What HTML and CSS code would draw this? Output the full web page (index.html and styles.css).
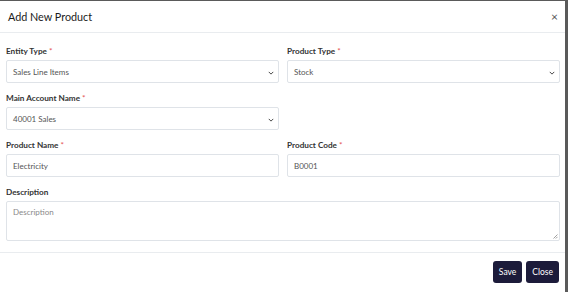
FILE: index.html
```html
<!DOCTYPE html>
<html>
<head>
<meta charset="utf-8">
<link rel="stylesheet" href="styles.css">
</head>
<body>
<div class="modal">
  <div class="modal-header">
    <h5 class="modal-title">Add New Product</h5>
    <span class="close">&times;</span>
  </div>
  <div class="modal-body">
    <div class="grid">
      <div class="field">
        <label class="label">Entity Type <span class="req">*</span></label>
        <div class="control select">Sales Line Items<svg class="chev" viewBox="0 0 8 5" width="6" height="4"><path d="M1 1l3 3 3-3" fill="none" stroke="#444" stroke-width="1.3"/></svg></div>
      </div>
      <div class="field">
        <label class="label">Product Type <span class="req">*</span></label>
        <div class="control select">Stock<svg class="chev" viewBox="0 0 8 5" width="6" height="4"><path d="M1 1l3 3 3-3" fill="none" stroke="#444" stroke-width="1.3"/></svg></div>
      </div>
      <div class="field">
        <label class="label">Main Account Name <span class="req">*</span></label>
        <div class="control select">40001 Sales<svg class="chev" viewBox="0 0 8 5" width="6" height="4"><path d="M1 1l3 3 3-3" fill="none" stroke="#444" stroke-width="1.3"/></svg></div>
      </div>
      <div class="field"></div>
      <div class="field">
        <label class="label">Product Name <span class="req">*</span></label>
        <div class="control">Electricity</div>
      </div>
      <div class="field">
        <label class="label">Product Code <span class="req">*</span></label>
        <div class="control">B0001</div>
      </div>
      <div class="field full">
        <label class="label">Description</label>
        <div class="control textarea"><span class="ph">Description</span><svg class="grip" viewBox="0 0 6 6" width="6" height="6"><path d="M5.5 1.5L1.5 5.5M5.5 3.8L3.8 5.5" stroke="#888" stroke-width="0.8"/></svg></div>
      </div>
    </div>
  </div>
  <div class="modal-footer">
    <button class="btn">Save</button>
    <button class="btn">Close</button>
  </div>
</div>
</body>
</html>
```
FILE: styles.css
```css
html, body {
  margin: 0;
  padding: 0;
}
body {
  background: #5a5a5a;
  width: 568px;
  height: 292px;
  overflow: hidden;
  font-family: Lato, "Noto Sans", sans-serif;
  color: #212529;
}
.modal {
  margin-top: 1px;
  width: 565px;
  height: 291px;
  background: #fff;
  box-sizing: border-box;
}
.modal-header {
  height: 31px;
  border-bottom: 1px solid #e9ecef;
  display: flex;
  align-items: center;
  justify-content: space-between;
  padding: 0 7px 0 8px;
}
.modal-title {
  margin: 0;
  font-size: 10.8px;
  font-weight: 400;
  color: #1a1a1a;
}
.close {
  font-size: 12px;
  color: #555;
  line-height: 1;
}
.modal-body {
  padding: 12px 6px 11px 6px;
  border-bottom: 1px solid #e9ecef;
}
.grid {
  display: grid;
  grid-template-columns: 273px 273px;
  column-gap: 8px;
  row-gap: 9px;
}
.full {
  grid-column: 1 / span 2;
}
.label {
  display: block;
  font-size: 8.2px;
  font-weight: 700;
  line-height: 12px;
  margin-bottom: 3px;
  color: #333;
}
.req {
  color: #e55353;
  font-weight: 400;
}
.control {
  position: relative;
  box-sizing: border-box;
  height: 23px;
  border: 1px solid #dfe3e8;
  border-radius: 2px;
  font-size: 8px;
  color: #555;
  padding: 0 6px;
  display: flex;
  align-items: center;
}
.select .chev {
  position: absolute;
  right: 4px;
  top: 10px;
}
.textarea {
  height: 40px;
  align-items: flex-start;
  padding-top: 5px;
}
.ph {
  color: #8a8a8a;
}
.grip {
  position: absolute;
  right: 1px;
  bottom: 1px;
}
.modal-footer {
  display: flex;
  justify-content: flex-end;
  gap: 4px;
  padding: 8px 6px 0 0;
}
.btn {
  height: 22px;
  border: none;
  border-radius: 3px;
  background: #1c1b3a;
  color: #fff;
  font-family: Lato, "Noto Sans", sans-serif;
  font-size: 8.5px;
  padding: 0 6px;
}
```
